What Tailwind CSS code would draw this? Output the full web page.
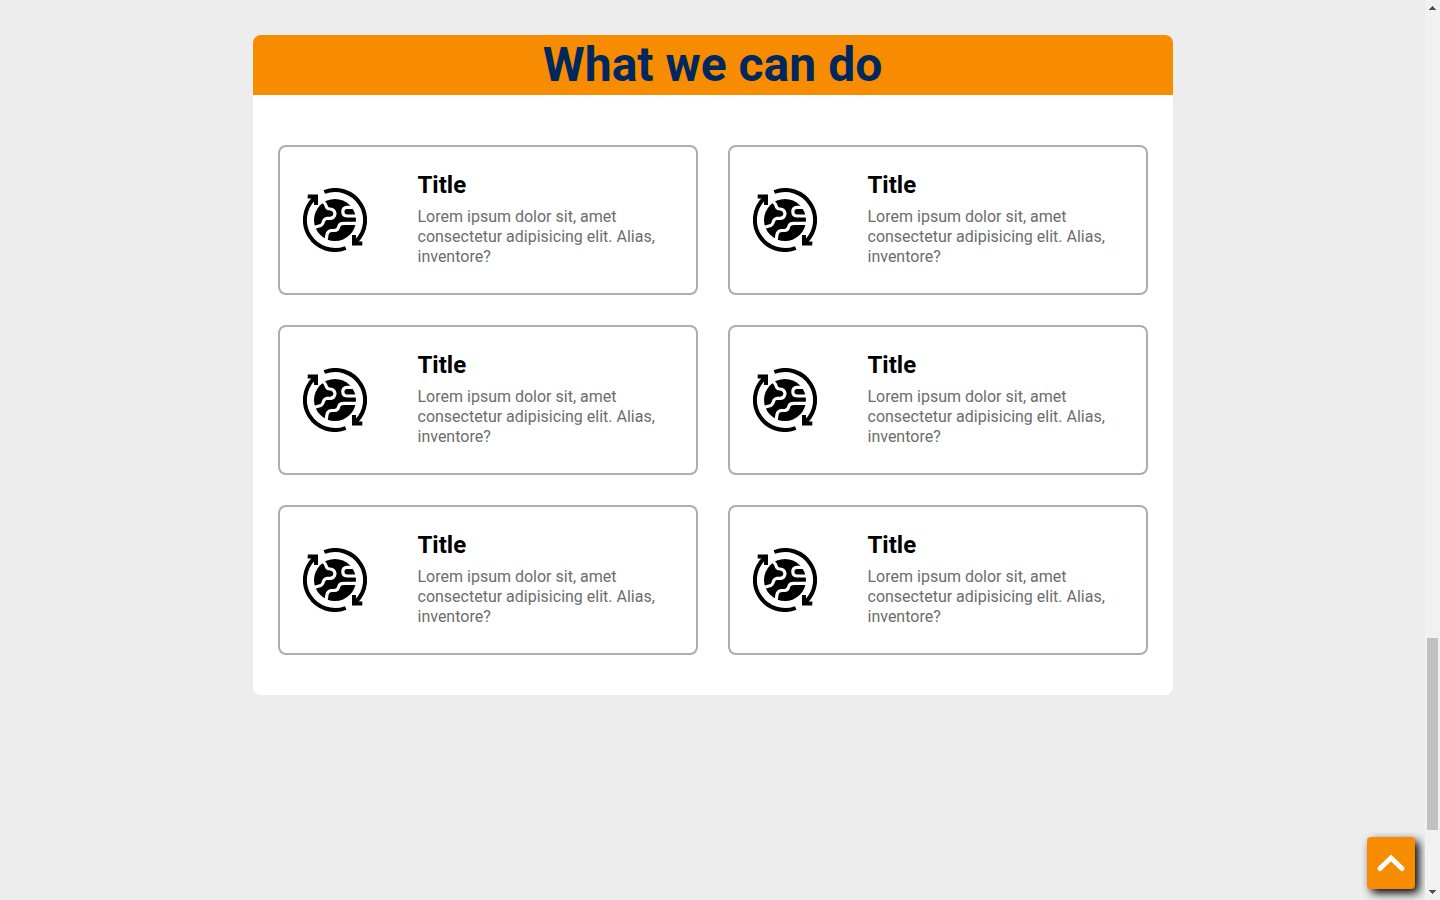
<!DOCTYPE html>
<html lang="en">
<head>
<meta charset="utf-8">
<meta name="viewport" content="width=device-width, initial-scale=1">
<title>What we can do</title>
<script src="https://cdn.jsdelivr.net/npm/@tailwindcss/browser@4"></script>
</head>
<body class="flex min-h-screen bg-[#ededed] font-['Roboto',sans-serif] text-black">
<svg class="hidden" aria-hidden="true">
  <symbol id="globe" viewBox="0 0 64 64">
    <g fill="none" stroke="#000" stroke-width="4">
      <path d="M21.300 4A30 30 0 0 1 53 53.500"/>
      <path d="M42.700 60A30 30 0 0 1 11 10.500"/>
    </g>
    <path d="M4.700 6.400H15V17H11V13L8.500 10.400H4.700Z"/>
    <path d="M59.300 57.600H49V47H53V51L55.500 53.600H59.300Z"/>
    <circle cx="32" cy="32" r="21"/>
    <g fill="none" stroke="#fff" stroke-width="3.200" stroke-linejoin="round">
      <path d="M19 12.500L22.300 16L23.700 19.500Q24.500 21 27 21Q31.500 21.500 32 25.500Q31.500 30 27.500 30.300H24Q21 31 20.300 34Q19.500 37.500 16 38L11 39.500"/>
      <path d="M51 19.300H44Q39.800 19.600 39.800 23.700Q39.800 27.600 44 28H54"/>
      <path d="M54 35.300H41Q36.500 35.300 35.800 38.500Q35 42.500 31.500 42.500H28.500Q24.500 43 24 46.500L23 53"/>
    </g>
  </symbol>
</svg>
<main class="min-w-0 flex-1 px-4 pt-[35px]">
  <section class="mx-auto max-w-[920px] overflow-hidden rounded-lg bg-white">
    <h1 class="bg-[#f88c00] text-center text-5xl leading-[60px] font-bold text-[#00285e]">What we can do</h1>
    <div id="cards" class="grid gap-[30px] px-[25px] pt-[50px] pb-10 md:grid-cols-2"></div>
  </section>
</main>
<button type="button" aria-label="Back to top" class="fixed right-[25px] bottom-[11px] flex h-[52px] w-12 items-center justify-center rounded bg-[#f88c00] shadow-[4px_4px_10px_#000]">
  <svg class="h-6 w-8" viewBox="0 0 32 24" fill="none" stroke="#fff" stroke-width="5" stroke-linecap="round" stroke-linejoin="miter" aria-hidden="true"><path d="M5 17.500L16 7L27 17.500"/></svg>
</button>
<aside class="sticky top-0 flex h-screen w-[15px] flex-col items-center bg-[#f1f1f1]" aria-hidden="true">
  <svg class="h-[15px] w-[15px]" viewBox="0 0 15 15" fill="#505050" shape-rendering="crispEdges"><path d="M7 6h1v1h1v1h1v1h1v1H4V9h1V8h1V7h1z"/></svg>
  <div class="grow-[623]"></div>
  <div class="w-[11px] grow-[192] bg-[#c1c1c1]"></div>
  <div class="grow-[55]"></div>
  <svg class="h-[15px] w-[15px]" viewBox="0 0 15 15" fill="#505050" shape-rendering="crispEdges"><path d="M4 5h7v1h-1v1H9v1H8v1H7V8H6V7H5V6H4z"/></svg>
</aside>
<template id="card">
  <article class="flex min-h-[150px] items-center rounded-lg border-2 border-[#adadad] px-[23px]">
    <svg class="mr-[51px] size-16 shrink-0" aria-hidden="true"><use href="#globe"/></svg>
    <div class="max-w-[255px] pb-0.5">
      <h2 class="mb-2 text-2xl leading-7 font-bold">Title</h2>
      <p class="text-base leading-5 text-[#6c6c6c]">Lorem ipsum dolor sit, amet consectetur adipisicing elit. Alias, inventore?</p>
    </div>
  </article>
</template>
<script>
  const card = document.getElementById('card');
  for (let i = 0; i < 6; i++) document.getElementById('cards').append(card.content.cloneNode(true));
</script>
</body>
</html>
